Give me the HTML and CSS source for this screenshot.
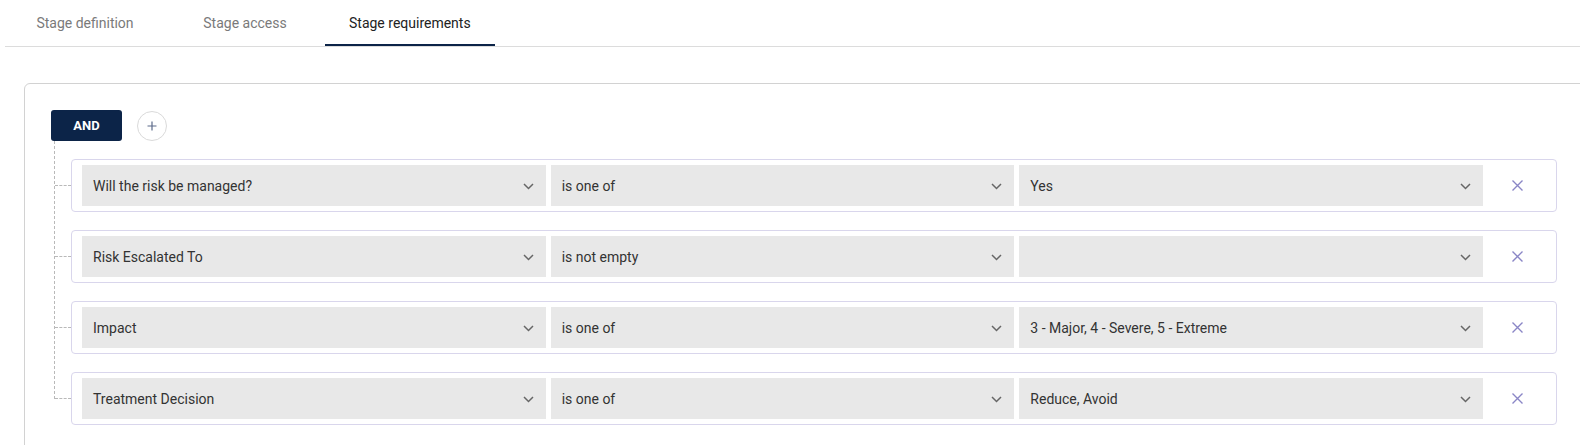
FILE: index.html
```html
<!DOCTYPE html>
<html lang="en">
<head>
<meta charset="utf-8">
<title>Stage requirements</title>
<link rel="stylesheet" href="styles.css">
</head>
<body>
<div class="page">
  <nav class="tabs">
    <div class="tab">Stage definition</div>
    <div class="tab">Stage access</div>
    <div class="tab active">Stage requirements</div>
  </nav>

  <section class="card">
    <div class="group-head">
      <button class="and-btn">AND</button>
      <button class="add-btn" aria-label="Add">
        <svg width="10" height="10" viewBox="0 0 10 10"><path d="M5 0.5V9.5M0.5 5H9.5" stroke="#5c6b8a" stroke-width="1.2" fill="none"/></svg>
      </button>
    </div>

    <div class="rules">
      <div class="rule">
        <div class="select"><span>Will the risk be managed?</span><svg class="chev" width="11" height="7" viewBox="0 0 11 7"><path d="M1 1L5.5 5.5L10 1" stroke="#666" stroke-width="1.5" fill="none"/></svg></div>
        <div class="select"><span>is one of</span><svg class="chev" width="11" height="7" viewBox="0 0 11 7"><path d="M1 1L5.5 5.5L10 1" stroke="#666" stroke-width="1.5" fill="none"/></svg></div>
        <div class="select"><span>Yes</span><svg class="chev" width="11" height="7" viewBox="0 0 11 7"><path d="M1 1L5.5 5.5L10 1" stroke="#666" stroke-width="1.5" fill="none"/></svg></div>
        <div class="remove"><svg width="11" height="11" viewBox="0 0 11 11"><path d="M0.5 0.5L10.5 10.5M10.5 0.5L0.5 10.5" stroke="#8a86c6" stroke-width="1.4" fill="none"/></svg></div>
      </div>
      <div class="rule">
        <div class="select"><span>Risk Escalated To</span><svg class="chev" width="11" height="7" viewBox="0 0 11 7"><path d="M1 1L5.5 5.5L10 1" stroke="#666" stroke-width="1.5" fill="none"/></svg></div>
        <div class="select"><span>is not empty</span><svg class="chev" width="11" height="7" viewBox="0 0 11 7"><path d="M1 1L5.5 5.5L10 1" stroke="#666" stroke-width="1.5" fill="none"/></svg></div>
        <div class="select"><span></span><svg class="chev" width="11" height="7" viewBox="0 0 11 7"><path d="M1 1L5.5 5.5L10 1" stroke="#666" stroke-width="1.5" fill="none"/></svg></div>
        <div class="remove"><svg width="11" height="11" viewBox="0 0 11 11"><path d="M0.5 0.5L10.5 10.5M10.5 0.5L0.5 10.5" stroke="#8a86c6" stroke-width="1.4" fill="none"/></svg></div>
      </div>
      <div class="rule">
        <div class="select"><span>Impact</span><svg class="chev" width="11" height="7" viewBox="0 0 11 7"><path d="M1 1L5.5 5.5L10 1" stroke="#666" stroke-width="1.5" fill="none"/></svg></div>
        <div class="select"><span>is one of</span><svg class="chev" width="11" height="7" viewBox="0 0 11 7"><path d="M1 1L5.5 5.5L10 1" stroke="#666" stroke-width="1.5" fill="none"/></svg></div>
        <div class="select"><span>3 - Major, 4 - Severe, 5 - Extreme</span><svg class="chev" width="11" height="7" viewBox="0 0 11 7"><path d="M1 1L5.5 5.5L10 1" stroke="#666" stroke-width="1.5" fill="none"/></svg></div>
        <div class="remove"><svg width="11" height="11" viewBox="0 0 11 11"><path d="M0.5 0.5L10.5 10.5M10.5 0.5L0.5 10.5" stroke="#8a86c6" stroke-width="1.4" fill="none"/></svg></div>
      </div>
      <div class="rule">
        <div class="select"><span>Treatment Decision</span><svg class="chev" width="11" height="7" viewBox="0 0 11 7"><path d="M1 1L5.5 5.5L10 1" stroke="#666" stroke-width="1.5" fill="none"/></svg></div>
        <div class="select"><span>is one of</span><svg class="chev" width="11" height="7" viewBox="0 0 11 7"><path d="M1 1L5.5 5.5L10 1" stroke="#666" stroke-width="1.5" fill="none"/></svg></div>
        <div class="select"><span>Reduce, Avoid</span><svg class="chev" width="11" height="7" viewBox="0 0 11 7"><path d="M1 1L5.5 5.5L10 1" stroke="#666" stroke-width="1.5" fill="none"/></svg></div>
        <div class="remove"><svg width="11" height="11" viewBox="0 0 11 11"><path d="M0.5 0.5L10.5 10.5M10.5 0.5L0.5 10.5" stroke="#8a86c6" stroke-width="1.4" fill="none"/></svg></div>
      </div>
    </div>
  </section>
</div>
</body>
</html>
```

FILE: styles.css
```css
* { box-sizing: border-box; }

html, body {
  margin: 0;
  padding: 0;
  background: #fff;
  overflow: hidden;
}

body {
  font-family: Roboto, "Liberation Sans", Arial, sans-serif;
  font-size: 14px;
  color: #333;
}

.page {
  width: 1580px;
  height: 445px;
  overflow: hidden;
}

.tabs {
  display: flex;
  margin-left: 5px;
  border-bottom: 1px solid #dcdcdc;
}

.tab {
  min-width: 160px;
  height: 46px;
  padding: 2px 24px 0;
  display: flex;
  align-items: center;
  justify-content: center;
  border-bottom: 2px solid transparent;
  color: #7a7a7a;
  font-size: 14px;
}

.tab.active {
  color: #222;
  border-bottom-color: #0c2448;
}

.card {
  margin: 36px -12px 0 24px;
  border: 1px solid #d2d2d2;
  border-radius: 6px;
  padding: 26px 34px 40px 26px;
}

.group-head {
  display: flex;
  align-items: center;
  gap: 15px;
}

.and-btn {
  width: 71px;
  height: 31px;
  border: none;
  border-radius: 3px;
  background: #0c2448;
  color: #fff;
  font-family: Roboto, "Liberation Sans", Arial, sans-serif;
  font-weight: 700;
  font-size: 13px;
  padding: 0;
}

.add-btn {
  width: 30px;
  height: 30px;
  border-radius: 50%;
  border: 1px solid #dadada;
  background: #fff;
  display: flex;
  align-items: center;
  justify-content: center;
  padding: 0;
}

.rules {
  position: relative;
  margin-top: 18px;
  padding-left: 20px;
  display: flex;
  flex-direction: column;
  gap: 18px;
}

.rules::before {
  content: "";
  position: absolute;
  left: 3px;
  top: -18px;
  bottom: 26px;
  border-left: 1px dashed #b9b9b9;
}

.rule {
  position: relative;
  display: flex;
  gap: 5px;
  height: 53px;
  padding: 5px 0 5px 10px;
  border: 1px solid #d9d6ec;
  border-radius: 4px;
}

.rule::before {
  content: "";
  position: absolute;
  left: -17px;
  top: 25px;
  width: 16px;
  border-top: 1px dashed #b9b9b9;
}

.select {
  flex: 1 1 0;
  display: flex;
  align-items: center;
  justify-content: space-between;
  background: #e8e8e8;
  padding: 0 12px 0 11px;
  color: #333;
  font-size: 14px;
}

.chev { flex: none; margin-top: 1px; }

.remove {
  flex: none;
  width: 68px;
  display: flex;
  align-items: center;
  justify-content: center;
  padding-right: 10px;
}
```
